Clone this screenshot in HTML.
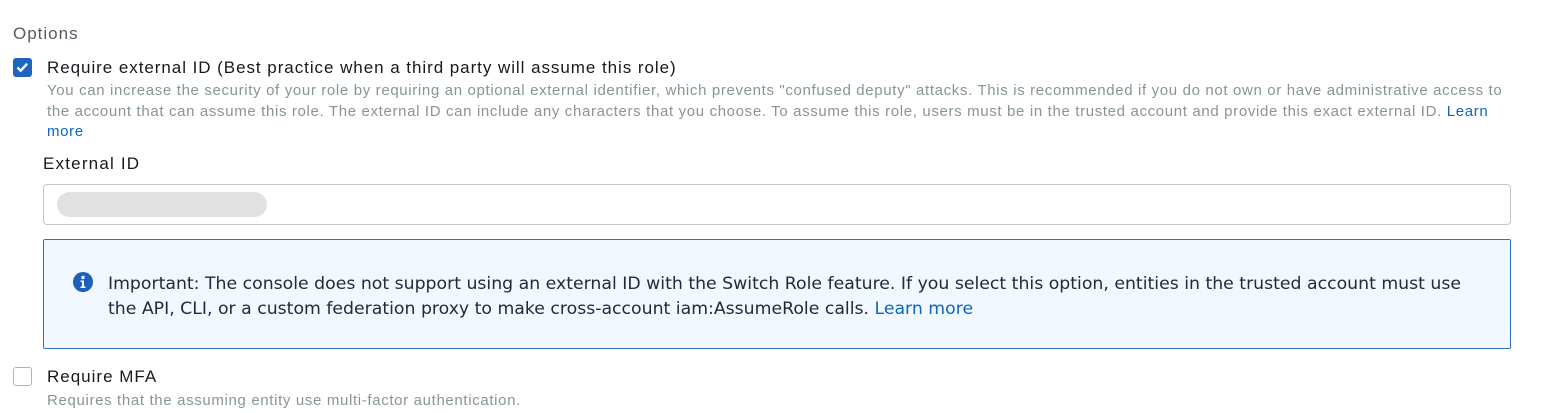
<!DOCTYPE html>
<html><head><style>
body{margin:0;width:1542px;height:413px;background:#fff;font-family:"Liberation Sans",Arial,sans-serif;position:relative;overflow:hidden}
.a{position:absolute;white-space:nowrap}
.desc{color:#879596;font-size:15px;letter-spacing:0.65px}
.lk{color:#0b66c3}
.cb{position:absolute;width:18px;height:18px;border-radius:3px}
</style></head><body>
<div class="a" style="left:13px;top:24px;font-size:17px;letter-spacing:1px;color:#545b64">Options</div>
<div class="cb" style="left:13px;top:58px;width:19px;height:19px;background:#1f64bd">
<svg width="19" height="19" viewBox="0 0 19 19"><path d="M4.5 9.5l3.2 3.2 6.5-7" fill="none" stroke="#fff" stroke-width="2.4"/></svg></div>
<div class="a" style="left:47px;top:58px;font-size:17px;letter-spacing:0.95px;color:#16191f">Require external ID (Best practice when a third party will assume this role)</div>
<div class="a desc" style="left:47px;top:82px">You can increase the security of your role by requiring an optional external identifier, which prevents "confused deputy" attacks. This is recommended if you do not own or have administrative access to</div>
<div class="a desc" style="left:47px;top:103px">the account that can assume this role. The external ID can include any characters that you choose. To assume this role, users must be in the trusted account and provide this exact external ID. <span class="lk">Learn</span></div>
<div class="a desc" style="left:47px;top:123px"><span class="lk">more</span></div>
<div class="a" style="left:43px;top:154px;font-size:17px;letter-spacing:1.2px;color:#16191f">External ID</div>
<div style="position:absolute;left:43px;top:184px;width:1466px;height:39px;border:1px solid #c6c6c6;border-radius:4px"></div>
<div style="position:absolute;left:57px;top:192px;width:210px;height:25px;border-radius:13px;background:#e1e1e1"></div>
<div style="position:absolute;left:43px;top:239px;width:1466px;height:108px;border:1px solid #2d72c4;border-radius:2px;background:#f1f8ff"></div>
<svg style="position:absolute;left:73px;top:272px" width="20" height="20" viewBox="0 0 20 20"><circle cx="10" cy="10" r="10" fill="#1d5fbf"/><circle cx="10" cy="5.5" r="1.7" fill="#fff"/><path d="M7.5 8.5h3.5v6h1.5v1.5h-5v-1.5h1.5v-4.5h-1.5z" fill="#fff"/></svg>
<div class="a" style="left:108px;top:274px;font-family:'DejaVu Sans',sans-serif;font-size:17.3px;color:#232b33">Important: The console does not support using an external ID with the Switch Role feature. If you select this option, entities in the trusted account must use</div>
<div class="a" style="left:108px;top:299px;font-family:'DejaVu Sans',sans-serif;font-size:17.3px;color:#232b33">the API, CLI, or a custom federation proxy to make cross-account iam:AssumeRole calls. <span class="lk">Learn more</span></div>
<div class="cb" style="left:13px;top:367px;border:1px solid #aab7b8;width:17px;height:17px"></div>
<div class="a" style="left:47px;top:367px;font-size:17px;letter-spacing:1px;color:#16191f">Require MFA</div>
<div class="a desc" style="left:47px;top:392px">Requires that the assuming entity use multi-factor authentication.</div>
</body></html>
